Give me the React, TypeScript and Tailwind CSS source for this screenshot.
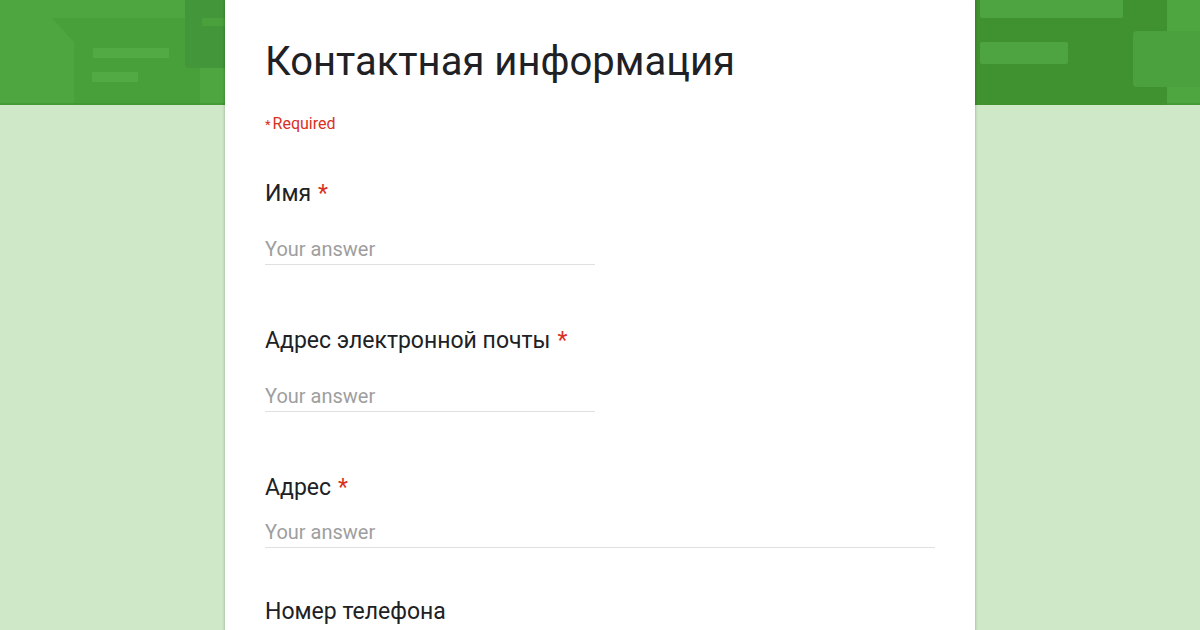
import React from 'react';

const HeaderArt: React.FC = () => (
  <svg width="1200" height="105" viewBox="0 0 1200 105" className="block">
    <rect width="1200" height="105" fill="#4da63f" />
    {/* left side shapes */}
    <path d="M52 18 H200 V105 H74 V42 Z" fill="#48a03b" />
    <rect x="93" y="48" width="76" height="10" fill="#51aa43" />
    <rect x="92" y="72" width="46" height="10" fill="#51aa43" />
    <rect x="185" y="-10" width="60" height="78" rx="4" fill="#43963a" />
    <rect x="202" y="18" width="40" height="8" fill="#4aa03d" />
    {/* right side shapes */}
    <rect x="960" y="0" width="207" height="105" fill="#40912f" />
    <rect x="980" y="-4" width="143" height="22" rx="2" fill="#4ea440" />
    <rect x="980" y="42" width="88" height="22" rx="2" fill="#4ea440" />
    <rect x="1133" y="31" width="80" height="56" rx="4" fill="#4ca13f" />
    <rect x="0" y="103" width="1200" height="2" fill="#3f922f" opacity="0.6" />
  </svg>
);

type FieldProps = {
  label: string;
  required?: boolean;
  full?: boolean;
  labelTop: string;
  answerTop: string;
};

const Field: React.FC<FieldProps> = ({ label, required, full, labelTop, answerTop }) => (
  <div className={labelTop}>
    <div className="text-[23px] leading-[28px] text-[#202124]">
      {label}
      {required && <span className="text-[#d93025] ml-[7px]">*</span>}
    </div>
    <div className={`${answerTop} ${full ? 'w-[670px]' : 'w-[330px]'} border-b border-[#e0e0e0] pb-[3px]`}>
      <div className="text-[20px] leading-[24px] text-[#9e9e9e]">Your answer</div>
    </div>
  </div>
);

const App: React.FC = () => {
  return (
    <div
      className="w-[1200px] h-[630px] overflow-hidden bg-[#cfe8c8]"
      style={{ fontFamily: 'Roboto, "Noto Sans", sans-serif' }}
    >
      <HeaderArt />
      <div className="-mt-[105px] flex justify-center">
        <div className="w-[750px] h-[700px] bg-white shadow-[0_0_3px_rgba(0,0,0,0.28)] px-[40px] pt-[38px]">
          <h1 className="text-[40px] leading-[48px] text-[#202124] font-normal">Контактная информация</h1>
          <div className="mt-[29px] text-[16px] leading-[18px] text-[#d93025]">
            <span className="mr-[2px] text-[13px]">*</span>Required
          </div>
          <Field label="Имя" required labelTop="mt-[46px]" answerTop="mt-[29px]" />
          <Field label="Адрес электронной почты" required labelTop="mt-[62px]" answerTop="mt-[29px]" />
          <Field label="Адрес" required full labelTop="mt-[62px]" answerTop="mt-[18px]" />
          <div className="mt-[50px] text-[23px] leading-[28px] text-[#202124]">Номер телефона</div>
        </div>
      </div>
    </div>
  );
};

export default App;
